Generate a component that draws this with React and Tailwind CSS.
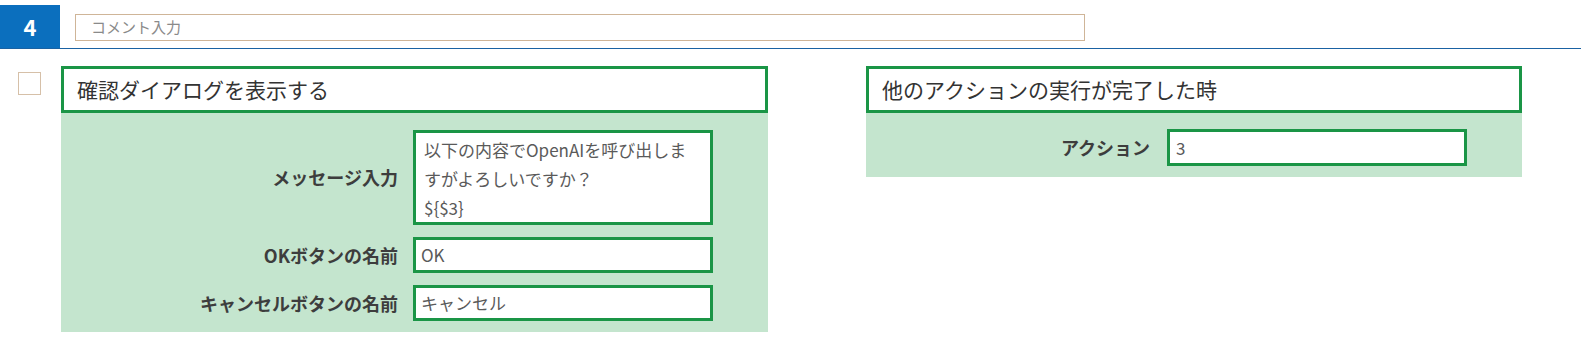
export default function App() {
  const font = { fontFamily: '"Noto Sans CJK JP", "Noto Sans", sans-serif' };
  return (
    <div className="w-[1581px] h-[340px] bg-white overflow-hidden" style={font}>
      <div className="pt-[5px]">
        <div className="flex h-[44px] border-b border-[#1a62a3]">
          <div className="w-[60px] h-full bg-[#0b6fbe] flex items-center justify-center text-white text-[22px] font-bold">
            4
          </div>
          <div className="ml-[15px] mt-[9px] w-[1010px] h-[27px] border-[1.5px] border-[#cfb598] flex items-center pl-[15px] text-[15px] text-[#8a8a8a]">
            コメント入力
          </div>
        </div>
      </div>
      <div className="flex mt-[17px]">
        <div className="ml-[18px] mt-[6px] w-[23px] h-[23px] border-[1.5px] border-[#d6c0a8] bg-white shrink-0" />
        <div className="ml-[20px] w-[707px] shrink-0">
          <div className="h-[47px] border-[3px] border-[#1a9546] bg-white flex items-center pl-[13px] text-[21px] text-[#333]">
            確認ダイアログを表示する
          </div>
          <div className="bg-[#c4e5ce] pt-[17px] pb-[11px] pr-[55px] flex flex-col gap-[12px]">
            <div className="flex items-center justify-end gap-[15px]">
              <span className="text-[18px] font-bold text-[#3d3d3d]">メッセージ入力</span>
              <div className="w-[300px] h-[95px] border-[3px] border-[#1a9546] bg-white pl-[8px] pt-[2px] text-[17px] leading-[29px] text-[#5a5a5a]">
                <div>以下の内容でOpenAIを呼び出しま</div>
                <div>すがよろしいですか？</div>
                <div>{"${$3}"}</div>
              </div>
            </div>
            <div className="flex items-center justify-end gap-[15px]">
              <span className="text-[18px] font-bold text-[#3d3d3d]">OKボタンの名前</span>
              <div className="w-[300px] h-[36px] border-[3px] border-[#1a9546] bg-white pl-[5px] flex items-center text-[17px] text-[#5a5a5a]">
                OK
              </div>
            </div>
            <div className="flex items-center justify-end gap-[15px]">
              <span className="text-[18px] font-bold text-[#3d3d3d]">キャンセルボタンの名前</span>
              <div className="w-[300px] h-[36px] border-[3px] border-[#1a9546] bg-white pl-[5px] flex items-center text-[17px] text-[#5a5a5a]">
                キャンセル
              </div>
            </div>
          </div>
        </div>
        <div className="ml-[98px] w-[656px] shrink-0">
          <div className="h-[47px] border-[3px] border-[#1a9546] bg-white flex items-center pl-[13px] text-[21px] text-[#333]">
            他のアクションの実行が完了した時
          </div>
          <div className="bg-[#c4e5ce] pt-[16px] pb-[11px] pr-[55px] flex flex-col">
            <div className="flex items-center justify-end gap-[17px]">
              <span className="text-[18px] font-bold text-[#3d3d3d]">アクション</span>
              <div className="w-[300px] h-[37px] border-[3px] border-[#1a9546] bg-white pl-[6px] flex items-center text-[17px] text-[#5a5a5a]">
                3
              </div>
            </div>
          </div>
        </div>
      </div>
    </div>
  );
}
